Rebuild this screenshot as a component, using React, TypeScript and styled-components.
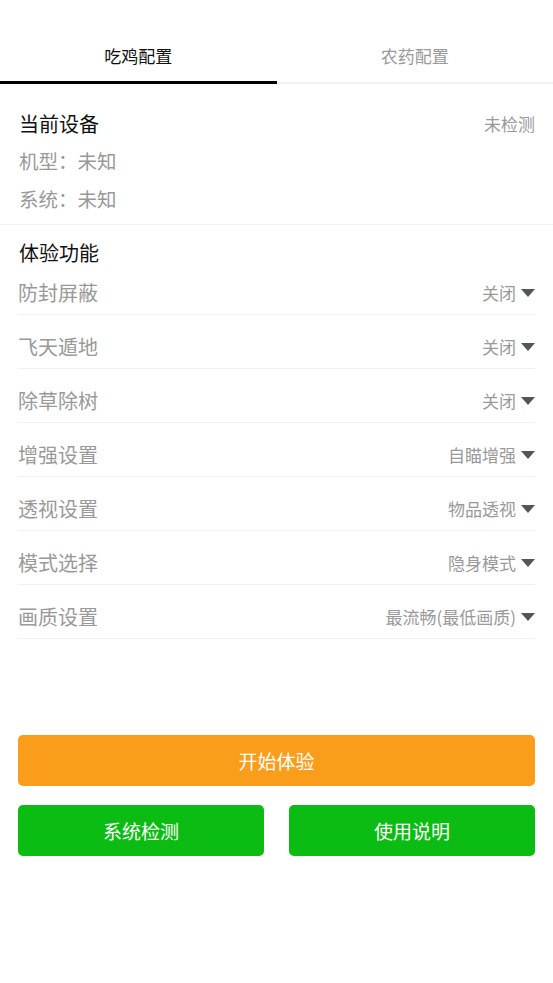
import React from "react";
import styled, { createGlobalStyle } from "styled-components";

const Global = createGlobalStyle`
  html, body { margin: 0; padding: 0; background: #fff; }
  body { font-family: "Noto Sans CJK SC", "Noto Sans", sans-serif; }
  * { box-sizing: border-box; }
`;

const Page = styled.div`
  width: 553px;
  min-height: 983px;
  background: #fff;
  display: flex;
  flex-direction: column;
`;

const TabBar = styled.div`
  display: flex;
  height: 84px;
`;

const Tab = styled.div<{ $active?: boolean }>`
  flex: 1;
  display: flex;
  justify-content: center;
  align-items: center;
  height: 84px;
  padding-top: ${(p) => (p.$active ? "30px" : "29px")};
  font-size: 17px;
  color: ${(p) => (p.$active ? "#111" : "#999")};
  border-bottom: ${(p) => (p.$active ? "3px solid #000" : "2px solid #f0f0f0")};
`;

const Device = styled.div`
  padding: 20px 18px 6px 19px;
  border-bottom: 1px solid #f3f3f3;
`;

const TitleRow = styled.div`
  display: flex;
  justify-content: space-between;
  align-items: center;
  height: 38px;
`;

const Title = styled.div`
  font-size: 20px;
  color: #111;
`;

const Status = styled.div`
  font-size: 17px;
  color: #999;
`;

const Info = styled.div`
  font-size: 19.5px;
  color: #999;
  line-height: 38px;
`;

const Features = styled.div`
  padding: 10px 18px 0 18px;
`;

const FeatTitle = styled(Title)`
  line-height: 36px;
  padding-left: 1px;
`;

const List = styled.div`
  display: flex;
  flex-direction: column;
`;

const Row = styled.div`
  display: flex;
  justify-content: space-between;
  align-items: center;
  padding-top: 10px;
  height: 54px;
  border-bottom: 1px solid #f0f0f0;
  &:first-child { padding-top: 0; height: 44px; }
`;

const Label = styled.div`
  font-size: 20px;
  color: #999;
  line-height: 44px;
`;

const Value = styled.div`
  display: flex;
  align-items: center;
  gap: 5px;
  font-size: 17px;
  color: #999;
  line-height: 44px;
`;

const Arrow = () => (
  <svg width="14" height="8" viewBox="0 0 14 8">
    <path d="M0 0 H14 L7 8 Z" fill="#555" />
  </svg>
);

const Actions = styled.div`
  padding: 96px 18px 0 18px;
  display: flex;
  flex-direction: column;
  gap: 19px;
`;

const Button = styled.div<{ $color: string }>`
  height: 51px;
  border-radius: 5px;
  background: ${(p) => p.$color};
  color: #fff;
  font-size: 19px;
  display: flex;
  align-items: center;
  justify-content: center;
  flex: 1 1 0;
`;

const WideButton = styled(Button)`
  flex: none;
`;

const ButtonRow = styled.div`
  display: flex;
  gap: 25px;
`;

const features: [string, string][] = [
  ["防封屏蔽", "关闭"],
  ["飞天遁地", "关闭"],
  ["除草除树", "关闭"],
  ["增强设置", "自瞄增强"],
  ["透视设置", "物品透视"],
  ["模式选择", "隐身模式"],
  ["画质设置", "最流畅(最低画质)"],
];

export default function App() {
  return (
    <Page>
      <Global />
      <TabBar>
        <Tab $active>吃鸡配置</Tab>
        <Tab>农药配置</Tab>
      </TabBar>
      <Device>
        <TitleRow>
          <Title>当前设备</Title>
          <Status>未检测</Status>
        </TitleRow>
        <Info>机型：未知</Info>
        <Info>系统：未知</Info>
      </Device>
      <Features>
        <FeatTitle>体验功能</FeatTitle>
        <List>
          {features.map(([l, v]) => (
            <Row key={l}>
              <Label>{l}</Label>
              <Value>
                {v}
                <Arrow />
              </Value>
            </Row>
          ))}
        </List>
      </Features>
      <Actions>
        <WideButton $color="#f99d1a">开始体验</WideButton>
        <ButtonRow>
          <Button $color="#0bbd13">系统检测</Button>
          <Button $color="#0bbd13">使用说明</Button>
        </ButtonRow>
      </Actions>
    </Page>
  );
}
